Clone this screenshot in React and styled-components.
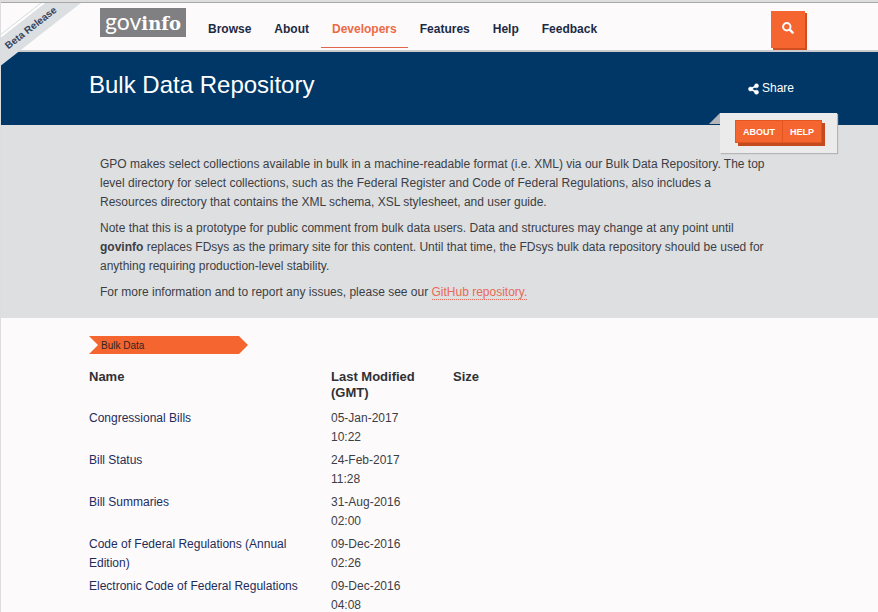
import React from 'react';
import styled, { createGlobalStyle } from 'styled-components';

const Global = createGlobalStyle`
  *, *::before, *::after { box-sizing: border-box; }
  body {
    margin: 0;
    overflow-x: hidden;
    background: #fcfafb;
    color: #3c3e44;
    font: 12px/19px "Liberation Sans", Arial, sans-serif;
  }
`;

const Page = styled.div`
  position: relative;
  border-left: 1px solid #dcdddf;
`;

const Header = styled.header`
  display: flex;
  align-items: flex-start;
  height: 52px;
  padding: 5px 73px 0 99px;
  background: #fcfafb;
  border-top: 2px solid #dedede;
  border-bottom: 2px solid #c9cbce;
  box-shadow: inset 0 1px #a8a8a8;
`;

const Logo = styled.a`
  display: flex;
  align-items: baseline;
  justify-content: center;
  width: 86px;
  height: 29px;
  margin-top: 1px;
  background: #808083;
  color: #fff;
  font: 400 23px/26px Lato, sans-serif;
  text-decoration: none;
  b { font: 700 18px/24px "DejaVu Serif", serif; }
`;

const Nav = styled.nav`
  display: flex;
  flex: 1;
  gap: 1px;
  padding-left: 11px;
`;

const NavLink = styled.a`
  height: 41px;
  padding: 13px 11px 0;
  border-bottom: 1px solid ${(p) => (p.$active ? '#e0674a' : 'transparent')};
  color: ${(p) => (p.$active ? '#ec6a47' : '#1c2b45')};
  font-size: 12px;
  font-weight: 700;
  text-decoration: none;
`;

const SearchButton = styled.button`
  display: flex;
  justify-content: center;
  width: 34px;
  height: 37px;
  margin-top: 4px;
  padding: 11px 0 0;
  border: 0;
  background: #f4652f;
  box-shadow: 2px 2px #d14e1f;
`;

const RibbonFrame = styled.div`
  position: absolute;
  top: 3px;
  left: 0;
  width: 82px;
  height: 64px;
  overflow: hidden;
  pointer-events: none;
`;

const Ribbon = styled.div`
  position: absolute;
  top: 14px;
  left: -35px;
  width: 130px;
  height: 22px;
  background: #dcdfe1;
  box-shadow: 0 -2px #fff, 0 -3px #dcdfe1;
  color: #35435c;
  font-size: 10px;
  font-weight: 700;
  line-height: 21px;
  text-align: center;
  transform: rotate(-38deg);
`;

const Banner = styled.section`
  position: relative;
  display: flex;
  justify-content: space-between;
  height: 73px;
  padding: 18px 84px 0 88px;
  background: #003767;
  color: #fff;
`;

const Title = styled.h1`
  margin: 0;
  font-size: 24px;
  font-weight: 400;
  line-height: 30px;
`;

const Share = styled.a`
  display: flex;
  align-items: center;
  gap: 3px;
  height: 19px;
  margin-top: 9px;
  color: #fff;
  text-decoration: none;
`;

const Card = styled.div`
  position: absolute;
  top: 61px;
  right: 41px;
  display: flex;
  width: 117px;
  height: 40px;
  padding: 7px 15px;
  background: #ebebeb;
  box-shadow: 1px 1px 1px #b3b5b8;
  &::before {
    content: '';
    position: absolute;
    top: 0;
    left: -11px;
    width: 11px;
    height: 11px;
    background: #b4b6b9;
    clip-path: polygon(100% 0, 100% 100%, 0 100%);
  }
`;

const ButtonPair = styled.div`
  display: flex;
  height: 23px;
  box-shadow: 3px 3px #c44a20;
`;

const CardButton = styled.button`
  padding: 0 7px;
  border: 1px solid #e2561f;
  border-width: 1px 1px 1px ${(p) => (p.$joined ? '0' : '1px')};
  background: #f4652f;
  color: #fff;
  font: 700 9px/20px "Liberation Sans", Arial, sans-serif;
`;

const Intro = styled.section`
  padding: 30px 99px 9px;
  background: #dddfe1;
`;

const Paragraph = styled.p`
  max-width: 669px;
  margin: 0 0 7px;
  a {
    color: #e96a55;
    text-decoration: none;
    border-bottom: 1px dotted #e96a55;
  }
`;

const Main = styled.main`
  padding: 18px 88px 0;
`;

const Crumb = styled.div`
  width: 159px;
  height: 18px;
  padding-left: 12px;
  background: #f4652f;
  clip-path: polygon(0 0, 150px 0, 100% 50%, 150px 100%, 0 100%, 9px 50%);
  color: #2f2622;
  font-size: 10px;
`;

const Table = styled.table`
  width: 420px;
  margin-top: 13px;
  border-collapse: collapse;
  table-layout: fixed;
`;

const Th = styled.th`
  width: ${(p) => p.$width};
  padding: 2px 30px 6px 0;
  color: #303136;
  font-size: 13px;
  line-height: 16px;
  text-align: left;
  vertical-align: top;
`;

const Td = styled.td`
  padding: 2px ${(p) => (p.$narrow ? '40px' : '20px')} 2px 0;
  vertical-align: top;
  a { color: #1d2d5c; text-decoration: none; }
`;

const rows = [
  ['Congressional Bills', '05-Jan-2017 10:22'],
  ['Bill Status', '24-Feb-2017 11:28'],
  ['Bill Summaries', '31-Aug-2016 02:00'],
  ['Code of Federal Regulations (Annual Edition)', '09-Dec-2016 02:26'],
  ['Electronic Code of Federal Regulations', '09-Dec-2016 04:08'],
];

const links = ['Browse', 'About', 'Developers', 'Features', 'Help', 'Feedback'];

const SearchIcon = () => (
  <svg width="12" height="12" viewBox="0 0 12 12" fill="none" stroke="#fff" aria-hidden="true">
    <circle cx="4.8" cy="4.8" r="3.7" strokeWidth="2" />
    <path d="M7.7 7.7 L10.6 10.6" strokeWidth="2.4" strokeLinecap="round" />
  </svg>
);

const ShareIcon = () => (
  <svg width="11" height="12" viewBox="0 0 11 12" fill="#fff" stroke="#fff" aria-hidden="true">
    <path d="M8.5 2.8 L2.5 6 L8.5 9.2" fill="none" strokeWidth="1.6" />
    <circle cx="8.5" cy="2.8" r="2" strokeWidth="0.6" />
    <circle cx="2.5" cy="6" r="2" strokeWidth="0.6" />
    <circle cx="8.5" cy="9.2" r="2" strokeWidth="0.6" />
  </svg>
);

export default function App() {
  return (
    <>
      <Global />
      <Page>
        <Header>
          <Logo href="#">gov<b>info</b></Logo>
          <Nav>
            {links.map((name) => (
              <NavLink key={name} href="#" $active={name === 'Developers'}>{name}</NavLink>
            ))}
          </Nav>
          <SearchButton aria-label="Search"><SearchIcon /></SearchButton>
        </Header>
        <Banner>
          <Title>Bulk Data Repository</Title>
          <Share href="#"><ShareIcon />Share</Share>
          <Card>
            <ButtonPair>
              <CardButton>ABOUT</CardButton>
              <CardButton $joined>HELP</CardButton>
            </ButtonPair>
          </Card>
        </Banner>
        <RibbonFrame><Ribbon>Beta Release</Ribbon></RibbonFrame>
        <Intro>
          <Paragraph>
            GPO makes select collections available in bulk in a machine-readable format (i.e. XML) via our Bulk Data
            Repository. The top level directory for select collections, such as the Federal Register and Code of
            Federal Regulations, also includes a Resources directory that contains the XML schema, XSL stylesheet, and
            user guide.
          </Paragraph>
          <Paragraph>
            Note that this is a prototype for public comment from bulk data users. Data and structures may change at
            any point until <b>govinfo</b> replaces FDsys as the primary site for this content. Until that time, the
            FDsys bulk data repository should be used for anything requiring production-level stability.
          </Paragraph>
          <Paragraph>
            For more information and to report any issues, please see our <a href="#">GitHub repository.</a>
          </Paragraph>
        </Intro>
        <Main>
          <Crumb>Bulk Data</Crumb>
          <Table>
            <thead>
              <tr>
                <Th $width="242px">Name</Th>
                <Th $width="122px">Last Modified (GMT)</Th>
                <Th>Size</Th>
              </tr>
            </thead>
            <tbody>
              {rows.map(([name, date]) => (
                <tr key={name}>
                  <Td><a href="#">{name}</a></Td>
                  <Td $narrow>{date}</Td>
                  <Td />
                </tr>
              ))}
            </tbody>
          </Table>
        </Main>
      </Page>
    </>
  );
}
